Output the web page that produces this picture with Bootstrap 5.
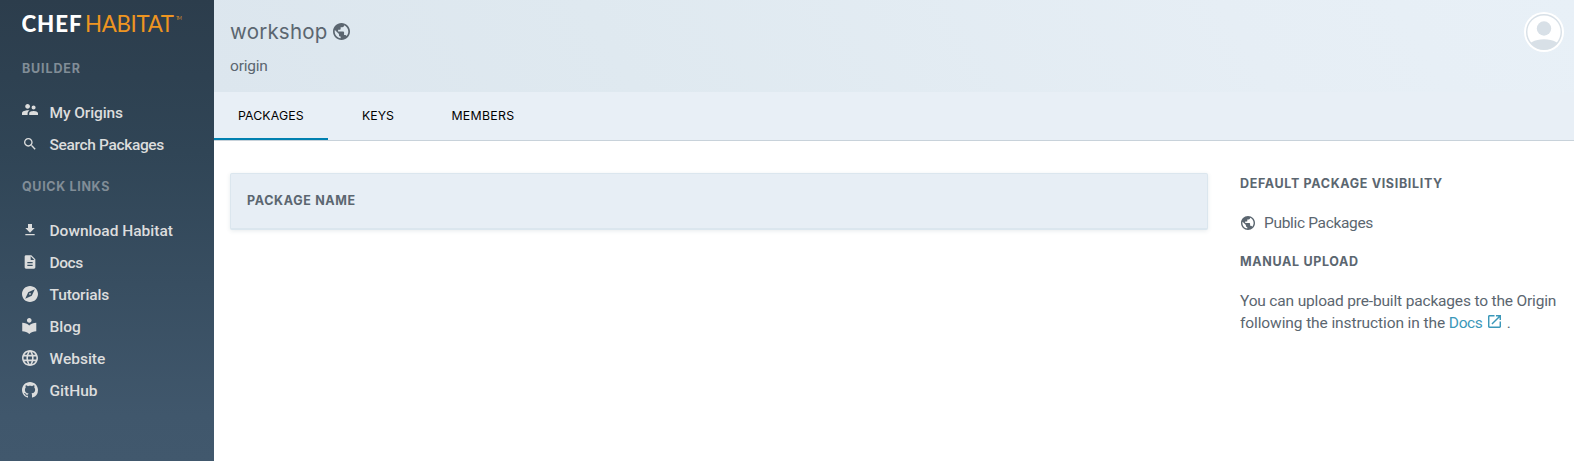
<!DOCTYPE html>
<html lang="en">
<head>
<meta charset="utf-8">
<meta name="viewport" content="width=device-width, initial-scale=1">
<title>workshop origin</title>
<link href="https://cdn.jsdelivr.net/npm/bootstrap@5.3.0/dist/css/bootstrap.min.css" rel="stylesheet">
<style>
body{font-family:Roboto,sans-serif;font-size:15.5px;line-height:22px;color:#5b6670;background:#fff;height:100vh;overflow:hidden}
.side-nav{width:214px;background:linear-gradient(#2c3d4c,#304556 33%,#40576c 90%,#41586d)}
.brand{height:48px;padding-left:22px}
.caps{font:700 12.5px/20px Inter,sans-serif;letter-spacing:.66px}
.side-nav .caps{color:#818d97;padding-left:22px}
.side-nav .nav-link{height:32px;padding:0 0 0 22px;color:#dcdddd;font-weight:500;white-space:nowrap}
.side-nav .nav-link svg{margin-right:11.5px;transform:translateY(-1px)}
svg{fill:currentColor;flex:none}
.side-nav .nav-link svg.up{transform:translateY(-3.5px)}
.origin-head{height:92px;padding:20px 10px 0 16px;background:linear-gradient(60deg,#dce6ee,#dfe9f0 30%,#e6eef5 75%,#e8f0f7)}
.origin-head h1{font:400 20.5px/24px Inter,sans-serif;letter-spacing:.22px}
.tab-bar{height:49px;background:#e8eff6;border-bottom:1px solid #c8d2da}
.tab-bar .nav-link{font:400 12.3px/48px Inter,sans-serif;color:#000;padding:0;height:48px;border-radius:0}
.tab-bar .active{border-bottom:2px solid #0080b0}
.avatar{width:40px;height:40px;margin-top:-8px}
.content{padding:32px 0 0 16px}
.pkg-table{height:57px;background:#e7eef5;border:1px solid #dbe6ee;border-bottom-width:2px;border-radius:2px;box-shadow:0 1px 4px rgba(60,90,110,.12);padding:0 0 0 16px}
.info{width:334px;margin:1px 0 0 32px;white-space:nowrap}
.info a{color:#3b98b9;letter-spacing:-.4px}
</style>
</head>
<body>
<div class="d-flex h-100">
  <aside class="side-nav flex-shrink-0">
    <div class="brand">
      <svg width="170" height="48" role="img" aria-label="Chef Habitat"><text x="-.5" y="32" font-family="Lato, sans-serif" font-weight="900" font-size="22.3" textLength="60" fill="#fff">CHEF</text><text x="63" y="32" font-family="Lato, sans-serif" font-size="22.3" textLength="89" fill="#ee9521">HABITAT</text><text x="154" y="20" font-family="Lato, sans-serif" font-size="5" textLength="6" fill="#c5842c">TM</text></svg>
    </div>
    <div class="caps" style="margin:11px 0 23px;transform:translateY(-.5px);letter-spacing:.85px">BUILDER</div>
    <nav class="nav flex-column" style="margin-top:-5px">
      <a class="nav-link d-flex align-items-center" href="#" style="letter-spacing:-.1px"><svg class="up" width="16" height="16" viewBox="2 2 20 20"><path d="M16.5 12c1.38 0 2.49-1.12 2.49-2.5S17.88 7 16.5 7C15.12 7 14 8.12 14 9.5s1.12 2.5 2.5 2.5zM9 11c1.66 0 2.99-1.34 2.99-3S10.66 5 9 5C7.34 5 6 6.34 6 8s1.34 3 3 3zm7.5 3c-1.83 0-5.5.92-5.5 2.75V19h11v-2.25c0-1.83-3.67-2.75-5.5-2.75zM9 13c-2.33 0-7 1.17-7 3.5V19h7v-2.25c0-.85.33-2.34 2.37-3.47C10.5 13.1 9.66 13 9 13z"/></svg>My Origins</a>
      <a class="nav-link d-flex align-items-center" href="#" style="letter-spacing:-.35px"><svg width="16" height="16" viewBox="0 0 24 24"><path d="M15.5 14h-.79l-.28-.27C15.41 12.59 16 11.11 16 9.5 16 5.91 13.09 3 9.5 3S3 5.91 3 9.5 5.91 16 9.5 16c1.61 0 3.09-.59 4.23-1.57l.27.28v.79l5 4.99L20.49 19l-4.99-5zm-6 0C7.01 14 5 11.99 5 9.5S7.01 5 9.5 5 14 7.01 14 9.5 11.99 14 9.5 14z"/></svg>Search Packages</a>
    </nav>
    <div class="caps" style="margin:16px 0 18px">QUICK LINKS</div>
    <nav class="nav flex-column">
      <a class="nav-link d-flex align-items-center" href="#"><svg width="16" height="16" viewBox="0 0 24 24"><path d="M19 9h-4V3H9v6H5l7 7 7-7zM5 18v2h14v-2H5z"/></svg>Download Habitat</a>
      <a class="nav-link d-flex align-items-center" href="#" style="letter-spacing:-.4px"><svg width="16" height="16" viewBox="0 0 24 24"><path d="M14 2H6c-1.1 0-1.99.9-1.99 2L4 20c0 1.1.89 2 1.99 2H18c1.1 0 2-.9 2-2V8l-6-6zm2 16H8v-2h8v2zm0-4H8v-2h8v2zm-3-5V3.5L18.5 9H13z"/></svg>Docs</a>
      <a class="nav-link d-flex align-items-center" href="#" style="letter-spacing:-.15px"><svg width="16" height="16" viewBox="2 2 20 20"><path d="M12 10.9c-.61 0-1.1.49-1.1 1.1s.49 1.1 1.1 1.1c.61 0 1.1-.49 1.1-1.1s-.49-1.1-1.1-1.1zM12 2C6.48 2 2 6.48 2 12s4.48 10 10 10 10-4.48 10-10S17.52 2 12 2zm2.19 12.19L6 18l3.81-8.19L18 6l-3.81 8.19z"/></svg>Tutorials</a>
      <a class="nav-link d-flex align-items-center" href="#"><svg width="16" height="16" viewBox="2.7 2 20.5 20.5"><path d="M12 11.55C9.64 9.35 6.48 8 3 8v11c3.48 0 6.64 1.35 9 3.55 2.36-2.19 5.52-3.55 9-3.55V8c-3.48 0-6.64 1.35-9 3.55zM12 8c1.66 0 3-1.34 3-3s-1.34-3-3-3-3 1.34-3 3 1.34 3 3 3z"/></svg>Blog</a>
      <a class="nav-link d-flex align-items-center" href="#"><svg width="16" height="16" viewBox="2 2 20 20"><path d="M11.99 2C6.47 2 2 6.48 2 12s4.47 10 9.99 10C17.52 22 22 17.52 22 12S17.52 2 11.99 2zm6.93 6h-2.95c-.32-1.25-.78-2.45-1.38-3.56 1.84.63 3.37 1.91 4.33 3.56zM12 4.04c.83 1.2 1.48 2.53 1.91 3.96h-3.82c.43-1.43 1.08-2.76 1.91-3.96zM4.26 14C4.1 13.36 4 12.69 4 12s.1-1.36.26-2h3.38c-.08.66-.14 1.32-.14 2 0 .68.06 1.34.14 2H4.26zm.82 2h2.95c.32 1.25.78 2.45 1.38 3.56-1.84-.63-3.37-1.9-4.33-3.56zm2.95-8H5.08c.96-1.66 2.49-2.93 4.33-3.56C8.81 5.55 8.35 6.75 8.03 8zM12 19.96c-.83-1.2-1.48-2.53-1.91-3.96h3.82c-.43 1.43-1.08 2.76-1.91 3.96zM14.34 14H9.66c-.09-.66-.16-1.32-.16-2 0-.68.07-1.35.16-2h4.68c.09.65.16 1.32.16 2 0 .68-.07 1.34-.16 2zm.25 5.56c.6-1.11 1.06-2.31 1.38-3.56h2.95c-.96 1.65-2.49 2.93-4.33 3.56zM16.36 14c.08-.66.14-1.32.14-2 0-.68-.06-1.34-.14-2h3.38c.16.64.26 1.31.26 2s-.1 1.36-.26 2h-3.38z"/></svg>Website</a>
      <a class="nav-link d-flex align-items-center" href="#"><svg width="16" height="16" viewBox="0 0 16 16"><path d="M8 0C3.58 0 0 3.58 0 8c0 3.54 2.29 6.53 5.47 7.59.4.07.55-.17.55-.38 0-.19-.01-.82-.01-1.49-2.01.37-2.53-.49-2.69-.94-.09-.23-.48-.94-.82-1.13-.28-.15-.68-.52-.01-.53.63-.01 1.08.58 1.23.82.72 1.21 1.87.87 2.33.66.07-.52.28-.87.51-1.07-1.78-.2-3.64-.89-3.64-3.95 0-.87.31-1.59.82-2.15-.08-.2-.36-1.02.08-2.12 0 0 .67-.21 2.2.82.64-.18 1.32-.27 2-.27s1.36.09 2 .27c1.53-1.04 2.2-.82 2.2-.82.44 1.1.16 1.92.08 2.12.51.56.82 1.27.82 2.15 0 3.07-1.87 3.75-3.65 3.95.29.25.54.73.54 1.48 0 1.07-.01 1.93-.01 2.2 0 .21.15.46.55.38A8.01 8.01 0 0 0 16 8c0-4.42-3.58-8-8-8z"/></svg>GitHub</a>
    </nav>
  </aside>
  <main class="flex-grow-1">
    <header class="origin-head d-flex justify-content-between">
      <div>
        <h1 class="d-flex align-items-center m-0">workshop<svg width="17" height="17" viewBox="2 2 20 20" style="margin:-2px 0 0 5.5px"><path d="M12 2C6.48 2 2 6.48 2 12s4.48 10 10 10 10-4.48 10-10S17.52 2 12 2zm-1 17.93c-3.95-.49-7-3.85-7-7.93 0-.62.08-1.21.21-1.79L9 15v1c0 1.1.9 2 2 2v1.93zm6.9-2.54c-.26-.81-1-1.39-1.9-1.39h-1v-3c0-.55-.45-1-1-1H8v-2h2c.55 0 1-.45 1-1V7h2c1.1 0 2-.9 2-2v-.41c2.93 1.19 5 4.06 5 7.41 0 2.08-.8 3.97-2.1 5.39z"/></svg></h1>
        <div style="margin-top:11px;letter-spacing:-.2px">origin</div>
      </div>
      <svg class="avatar" viewBox="0 0 40 40"><clipPath id="face"><circle cx="20" cy="20" r="17.5"/></clipPath><circle cx="20" cy="20" r="20" fill="#fff"/><g clip-path="url(#face)" fill="#d8e0e7"><circle cx="20" cy="16.5" r="7.2"/><ellipse cx="20" cy="36.5" rx="17" ry="9.3"/></g><circle cx="20" cy="20" r="17.3" fill="none" stroke="#d8e0e7" stroke-width="1.4"/></svg>
    </header>
    <nav class="nav tab-bar">
      <a class="nav-link active" href="#" style="width:114px;padding-left:24px;letter-spacing:.12px">PACKAGES</a>
      <a class="nav-link" href="#" style="margin-left:34px">KEYS</a>
      <a class="nav-link" href="#" style="margin-left:57.5px;letter-spacing:.3px">MEMBERS</a>
    </nav>
    <div class="content d-flex">
      <section class="flex-grow-1">
        <div class="pkg-table caps d-flex align-items-center">PACKAGE NAME</div>
      </section>
      <aside class="info">
        <h2 class="caps m-0">DEFAULT PACKAGE VISIBILITY</h2>
        <div class="d-flex align-items-center" style="margin:18px 0 18px;letter-spacing:-.33px"><svg width="14" height="14" viewBox="2 2 20 20" style="margin:-1px 9px 0 1px"><path d="M12 2C6.48 2 2 6.48 2 12s4.48 10 10 10 10-4.48 10-10S17.52 2 12 2zm-1 17.93c-3.95-.49-7-3.85-7-7.93 0-.62.08-1.21.21-1.79L9 15v1c0 1.1.9 2 2 2v1.93zm6.9-2.54c-.26-.81-1-1.39-1.9-1.39h-1v-3c0-.55-.45-1-1-1H8v-2h2c.55 0 1-.45 1-1V7h2c1.1 0 2-.9 2-2v-.41c2.93 1.19 5 4.06 5 7.41 0 2.08-.8 3.97-2.1 5.39z"/></svg>Public Packages</div>
        <h2 class="caps m-0">MANUAL UPLOAD</h2>
        <p style="margin-top:18px"><span style="letter-spacing:-.17px">You can upload pre-built packages to the Origin</span><br><span style="letter-spacing:-.1px">following the instruction in the</span> <a class="text-decoration-none" href="#">Docs <svg width="13" height="13" viewBox="3 3 18 18" style="margin:-4px 2px 0 2px"><path d="M19 19H5V5h7V3H5c-1.11 0-2 .9-2 2v14c0 1.1.89 2 2 2h14c1.1 0 2-.9 2-2v-7h-2v7zM14 3v2h3.59l-9.83 9.83 1.41 1.41L19 6.41V10h2V3h-7z"/></svg></a> .</p>
      </aside>
    </div>
  </main>
</div>
<script src="https://cdn.jsdelivr.net/npm/bootstrap@5.3.0/dist/js/bootstrap.bundle.min.js"></script>
</body>
</html>
